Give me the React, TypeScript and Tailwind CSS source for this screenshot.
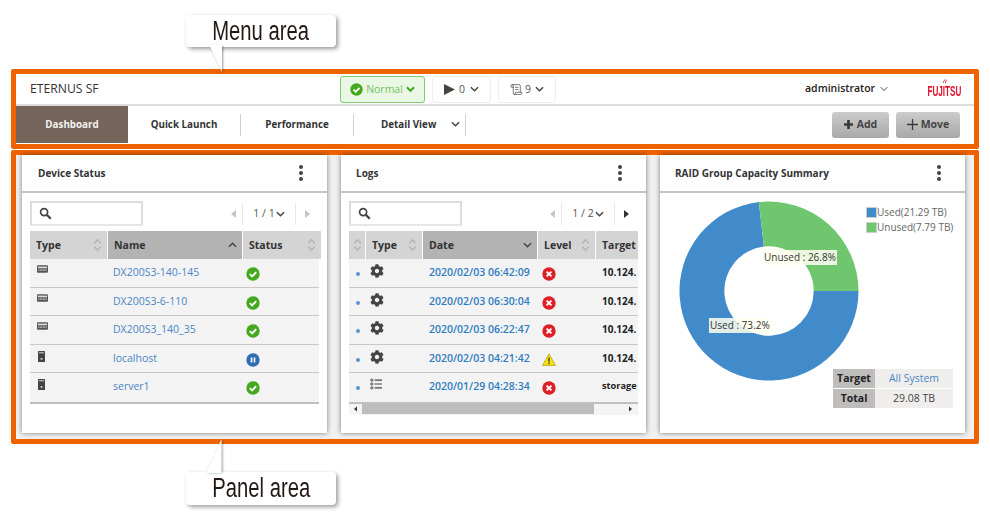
import React from "react";
import { ChevronDown, ScrollText } from "lucide-react";
import { FaCog } from "react-icons/fa";

const Chev = ({ className = "" }: { className?: string }) => (
  <svg viewBox="0 0 10 6" className={`w-[9px] h-[6px] ${className}`} fill="none" stroke="currentColor" strokeWidth="1.6">
    <path d="M1 1l4 4 4-4" />
  </svg>
);

const Sort = () => (
  <svg viewBox="0 0 10 16" className="w-[9px] h-[14px] text-[#b4b4b4]" fill="none" stroke="currentColor" strokeWidth="1.6">
    <path d="M1.5 6l3.5-4 3.5 4M1.5 10l3.5 4 3.5-4" />
  </svg>
);

const Ok = ({ small }: { small?: boolean }) => (
  <svg viewBox="0 0 14 14" className={small ? "w-[13px] h-[13px]" : "w-[14px] h-[14px]"}>
    <circle cx="7" cy="7" r="6.7" fill="#46a81e" />
    <path d="M3.8 7.2l2.3 2.3 4.1-4.3" fill="none" stroke="#fff" strokeWidth="1.9" />
  </svg>
);
const Pause = () => (
  <svg viewBox="0 0 14 14" className="w-[14px] h-[14px]">
    <circle cx="7" cy="7" r="6.7" fill="#2e6db4" />
    <path d="M5.5 4.5v5M8.5 4.5v5" stroke="#fff" strokeWidth="1.6" />
  </svg>
);
const Err = () => (
  <svg viewBox="0 0 14 14" className="w-[14px] h-[14px]">
    <circle cx="7" cy="7" r="6.7" fill="#dd1f26" />
    <path d="M4.6 4.6l4.8 4.8M9.4 4.6l-4.8 4.8" stroke="#fff" strokeWidth="2" />
  </svg>
);
const Warn = () => (
  <svg viewBox="0 0 14 13" className="w-[14px] h-[13px]">
    <path d="M7 .8L13.5 12.4H.5z" fill="#f7e214" stroke="#a99a10" strokeWidth=".7" />
    <path d="M7 4.5v4.2M7 9.6v1.4" stroke="#333" strokeWidth="1.3" />
  </svg>
);
const Search = () => (
  <svg viewBox="0 0 14 14" className="w-[13px] h-[13px] text-[#444]" fill="none" stroke="currentColor">
    <circle cx="5.5" cy="5.5" r="3.8" strokeWidth="1.8" />
    <path d="M8.5 8.5l4.2 4.2" strokeWidth="2.4" />
  </svg>
);
const Storage = () => (
  <svg viewBox="0 0 12 8" className="w-[11px] h-[8px]">
    <rect width="12" height="8" rx="1" fill="#555" />
    <rect x="1" y="1.4" width="10" height="1.8" fill="#ddd" />
    <path d="M1.5 5.2h9" stroke="#ddd" strokeWidth="1.4" strokeDasharray="1 .6" />
  </svg>
);
const Server = () => (
  <svg viewBox="0 0 7 11" className="ml-[1px] w-[7px] h-[11px]">
    <rect width="7" height="11" rx=".5" fill="#444" />
    <rect x="1" y="1" width="5" height="1.4" fill="#aaa" />
    <rect x="2.6" y="7" width="1.8" height="1.8" fill="#ccc" />
  </svg>
);
const ListIcon = () => (
  <svg viewBox="0 0 13 12" className="w-[12px] h-[12px] text-[#444]" fill="none" stroke="currentColor">
    <circle cx="2" cy="1.8" r="1.2" />
    <circle cx="2" cy="6" r="1.2" />
    <circle cx="2" cy="10.2" r="1.2" />
    <path d="M5 1.8h8M5 6h8M5 10.2h8" strokeWidth="1.3" />
  </svg>
);
const Dots = () => (
  <div className="flex flex-col gap-[2px]">
    <span className="w-[4px] h-[4px] rounded-full bg-[#444]" />
    <span className="w-[4px] h-[4px] rounded-full bg-[#444]" />
    <span className="w-[4px] h-[4px] rounded-full bg-[#444]" />
  </div>
);
const Tri = ({ left, dim, small }: { left?: boolean; dim?: boolean; small?: boolean }) => (
  <svg viewBox="0 0 5 8" className={`${small ? "w-[3px] h-[6px]" : "w-[5px] h-[8px]"} ${dim ? "text-[#c4c4c4]" : "text-[#333]"}`} fill="currentColor">
    <path d={left ? "M5 0v8L0 4z" : "M0 0v8l5-4z"} />
  </svg>
);

const Panel = ({ title, pad, children }: { title: string; pad: string; children: React.ReactNode }) => (
  <section className="w-[305px] h-[278px] bg-white shadow-[0_0_5px_rgba(0,0,0,0.5)] flex flex-col">
    <header className={`h-[38px] shrink-0 border-b-2 border-[#c4c4c4] flex items-center justify-between pr-[24px] ${pad}`}>
      <h2 className="pt-[1px] text-[10px] font-bold text-[#333]">{title}</h2>
      <Dots />
    </header>
    {children}
  </section>
);

const Toolbar = ({ page, nextDim }: { page: string; nextDim: boolean }) => (
  <div className="h-[25px] flex items-center justify-between mt-[8px] mb-[5px]">
    <div className="w-[113px] h-[25px] bg-white border-2 border-[#dcdcdc] border-b-[#e6e6e6] pl-[7px] flex items-center">
      <Search />
    </div>
    <div className="flex items-center h-[25px] text-[10.5px] text-[#555]">
      <span className="w-[11px] flex justify-start"><Tri left dim /></span>
      <span className="w-[54px] h-[22px] border-x border-[#e8e8e8] flex items-center justify-center gap-[1px]">
        {page}
        <Chev className="text-[#444]" />
      </span>
      <span className="w-[23px] flex justify-center"><Tri dim={nextDim} /></span>
    </div>
  </div>
);

const HCell = ({ label, active, sortIcon, dir }: { label?: string; active?: boolean; sortIcon?: boolean; dir?: "up" | "down" }) => (
  <div className={`h-[28px] flex items-center justify-between pl-[6px] pr-[5px] text-[10.5px] font-bold text-[#333] ${active ? "bg-[#b3b3b3]" : "bg-[#d4d4d4]"}`}>
    <span className="pt-[1px]">{label}</span>
    {sortIcon && <Sort />}
    {dir && <Chev className={`text-[#444] ${dir === "up" ? "rotate-180" : ""}`} />}
  </div>
);

const devices = [
  { icon: <Storage />, name: "DX200S3-140-145", status: <Ok /> },
  { icon: <Storage />, name: "DX200S3-6-110", status: <Ok /> },
  { icon: <Storage />, name: "DX200S3_140_35", status: <Ok /> },
  { icon: <Server />, name: "localhost", status: <Pause /> },
  { icon: <Server />, name: "server1", status: <Ok /> },
];

const gear = <FaCog className="text-[#444] text-[14px]" />;
const logs = [
  { icon: gear, date: "2020/02/03 06:42:09", level: <Err />, target: "10.124.", size: "text-[10px]" },
  { icon: gear, date: "2020/02/03 06:30:04", level: <Err />, target: "10.124.", size: "text-[10px]" },
  { icon: gear, date: "2020/02/03 06:22:47", level: <Err />, target: "10.124.", size: "text-[10px]" },
  { icon: gear, date: "2020/02/03 04:21:42", level: <Warn />, target: "10.124.", size: "text-[10px]" },
  { icon: <ListIcon />, date: "2020/01/29 04:28:34", level: <Err />, target: "storage", size: "text-[9.2px]" },
];

const DeviceTable = () => (
  <div className="border-b-2 border-[#c0c0c0]">
    <div className="grid grid-cols-[77px_134px_78px] gap-x-[1px] w-[289px] -mr-[1px]">
      <HCell label="Type" sortIcon />
      <HCell label="Name" active dir="up" />
      <HCell label="Status" sortIcon />
    </div>
    {devices.map((d, i) => (
      <div key={d.name} className={`grid grid-cols-[78px_134px_77px] h-[28.5px] bg-[#f3f3f3] text-[10.5px] ${i < 4 ? "border-b border-[#c8c8c8]" : ""}`}>
        <div className="pl-[7px] pt-[6px]">{d.icon}</div>
        <div className="pl-[5px] pt-[6px] text-[#4a86c5]">{d.name}</div>
        <div className="pl-[4px] pt-[8px]">{d.status}</div>
      </div>
    ))}
  </div>
);

const LogTable = () => (
  <div>
    <div className="overflow-hidden border-b-2 border-[#c0c0c0] w-[289px]">
      <div className="grid grid-cols-[16px_56px_114px_57px_60px] gap-x-[1px] w-[307px]">
        <div className="h-[28px] bg-[#d4d4d4] flex items-center justify-center"><Sort /></div>
        <HCell label="Type" sortIcon />
        <HCell label="Date" active dir="down" />
        <HCell label="Level" sortIcon />
        <HCell label="Target" />
      </div>
      {logs.map((l, i) => (
        <div key={l.date} className={`grid grid-cols-[17px_57px_115px_58px_42px] w-[289px] h-[28.5px] bg-[#f3f3f3] text-[10.5px] ${i < 4 ? "border-b border-[#c8c8c8]" : ""}`}>
          <div className="flex justify-center pt-[13px]"><span className="w-[4px] h-[4px] rounded-full bg-[#5b94d0]" /></div>
          <div className="pl-[4px] pt-[5px]">{l.icon}</div>
          <div className="pl-[6px] pt-[6px] font-semibold text-[#2e7cc0] whitespace-nowrap">{l.date}</div>
          <div className="pl-[4px] pt-[8px]">{l.level}</div>
          <div className={`pl-[6px] pt-[6px] font-bold text-[#222] whitespace-nowrap ${l.size}`}>{l.target}</div>
        </div>
      ))}
    </div>
    <div className="h-[11px] w-[289px] bg-[#f4f4f4] flex items-center">
      <span className="w-[13px] flex justify-center"><Tri left small /></span>
      <div className="w-[232px] h-[10px] bg-[#bdbdbd]" />
      <span className="flex-1 flex justify-end pr-[6px]"><Tri small /></span>
    </div>
  </div>
);

const Donut = () => (
  <svg viewBox="0 0 182 182" className="w-[182px] h-[182px]">
    <path d="M180.5 91 A89.5 89.5 0 1 1 80.8 2.1 L85.9 46.6 A44.7 44.7 0 1 0 135.7 91 Z" fill="#428bca" />
    <path d="M80.8 2.1 A89.5 89.5 0 0 1 180.5 91 L135.7 91 A44.7 44.7 0 0 0 85.9 46.6 Z" fill="#70c66f" />
  </svg>
);

const Callout = ({ label, className, tail }: { label: string; className: string; tail: React.ReactNode }) => (
  <div className={`absolute w-[150px] h-[32px] bg-white rounded-[4px] shadow-[2px_2px_4px_rgba(0,0,0,0.4)] flex items-center justify-center ${className}`}>
    <span className="text-[27px] leading-none text-[#231815] scale-x-[0.75] whitespace-nowrap [font-family:'Liberation_Sans',sans-serif]">{label}</span>
    {tail}
  </div>
);

export default function App() {
  return (
    <div className="relative w-[990px] h-[515px] bg-white overflow-hidden pt-[69px] pl-[11px] [font-family:'Open_Sans','Noto_Sans',sans-serif]">
      <div className="w-[968px] h-[80px] border-[5px] border-[#ee6300] rounded-[2px] bg-white">
        <div className="h-[32px] border-b-2 border-[#dedede] flex items-center pl-[14px] pr-[13px]">
          <span className="text-[12.2px] text-[#333] w-[310px] pt-[1px]">ETERNUS SF</span>
          <div className="w-[85px] h-[27px] rounded-[3px] border border-[#7ecc6c] bg-[#eaf7e5] flex items-center justify-center gap-[3px] text-[10.5px] text-[#73c15f]">
            <Ok small />
            <span className="pt-[1px]">Normal</span>
            <svg viewBox="0 0 10 6" className="w-[9px] h-[6px] text-[#46a81e]" fill="none" stroke="currentColor" strokeWidth="2.2"><path d="M1 1l4 4 4-4" /></svg>
          </div>
          <div className="ml-[7px] w-[59px] h-[27px] rounded-[3px] border border-[#eeeeee] flex items-center justify-center gap-[4px] text-[10.5px] text-[#555]">
            <svg viewBox="0 0 10 10" className="w-[11px] h-[11px] text-[#444]" fill="currentColor"><path d="M0 0v10l10-5z" /></svg>
            <span className="pt-[1px]">0</span>
            <Chev className="ml-[1px] text-[#444]" />
          </div>
          <div className="ml-[7px] w-[58px] h-[27px] rounded-[3px] border border-[#eeeeee] flex items-center justify-center gap-[2px] text-[10.5px] text-[#555]">
            <ScrollText size={13} strokeWidth={1.3} className="text-[#444]" />
            <span className="pt-[1px]">9</span>
            <Chev className="ml-[2px] text-[#444]" />
          </div>
          <span className="ml-[249px] text-[10.5px] font-semibold text-[#222]">administrator</span>
          <ChevronDown size={12} strokeWidth={2} className="ml-[3px] text-[#444]" />
          <div className="relative ml-auto text-[14px] font-bold leading-none text-[#e2112b] scale-x-[0.58] origin-right whitespace-nowrap pt-[4px] [font-family:'Liberation_Sans',sans-serif]">
            FUJITSU
            <svg viewBox="0 0 8 6" className="absolute left-[25px] top-[-1px] w-[10px] h-[5px]" fill="none" stroke="#e2112b" strokeWidth="1.2">
              <path d="M1 5C1 2 4 0 7 1.5 5.5 3 5 4 5 5" />
            </svg>
          </div>
        </div>
        <nav className="h-[37px] flex items-center pr-[14px] text-[9.8px]">
          <div className="w-[112px] h-[37px] bg-[#75645a] flex items-center justify-center pt-[2px] font-bold text-[#f2f2f2]">Dashboard</div>
          {["Quick Launch", "Performance"].map((t) => (
            <div key={t} className="w-[113px] h-[22px] border-r border-[#d0d0d0] flex items-center justify-center pt-[2px] font-bold text-[#333]">{t}</div>
          ))}
          <div className="w-[112px] h-[22px] border-r border-[#d0d0d0] flex items-center font-bold text-[#333] pl-[27px] pr-[5px] pt-[2px] justify-between">
            <span>Detail View</span>
            <Chev className="text-[#444] -mt-[4px]" />
          </div>
          <div className="ml-auto flex gap-[7px]">
            <button className="w-[57px] h-[26px] rounded-[3px] bg-gradient-to-b from-[#cccccc] to-[#a8a8a8] flex items-center justify-center gap-[4px] text-[10.5px] font-bold text-[#444]">
              <svg viewBox="0 0 10 10" className="w-[9px] h-[9px]" fill="#3a3a3a"><path d="M3.5 0h3v3.5H10v3H6.5V10h-3V6.5H0v-3h3.5z" /></svg>
              Add
            </button>
            <button className="w-[64px] h-[26px] rounded-[3px] bg-gradient-to-b from-[#cccccc] to-[#a8a8a8] flex items-center justify-center gap-[3px] text-[10.5px] font-bold text-[#444]">
              <svg viewBox="0 0 11 11" className="w-[11px] h-[11px]" fill="none" stroke="#3a3a3a" strokeWidth="1.3"><path d="M5.5 0v11M0 5.5h11" /></svg>
              Move
            </button>
          </div>
        </nav>
      </div>

      <div className="mt-[1px] w-[968px] h-[294px] border-[5px] border-[#ee6300] rounded-[2px] bg-[#f1f1f1] flex gap-[14px] pl-[6px] pt-0">
        <Panel title="Device Status" pad="pl-[16px]">
          <div className="px-[8px]">
            <Toolbar page="1 / 1" nextDim />
            <DeviceTable />
          </div>
        </Panel>
        <Panel title="Logs" pad="pl-[15px]">
          <div className="px-[8px]">
            <Toolbar page="1 / 2" nextDim={false} />
            <LogTable />
          </div>
        </Panel>
        <Panel title="RAID Group Capacity Summary" pad="pl-[15px]">
          <div className="relative flex-1">
            <div className="absolute left-[18px] top-[7px]"><Donut /></div>
            <span className="absolute left-[103px] top-[57px] px-[1px] bg-[#fffff0]/85 text-[10px] leading-[15px] text-[#333] whitespace-nowrap">Unused : 26.8%</span>
            <span className="absolute left-[49px] top-[125px] px-[1px] bg-[#fffff0]/85 text-[10px] leading-[15px] text-[#333] whitespace-nowrap">Used : 73.2%</span>
            <div className="absolute left-[207px] top-[12px] text-[10px] leading-[15px] text-[#666]">
              <div className="flex items-center"><span className="w-[9px] h-[9px] mr-[1px] bg-[#428bca] outline outline-1 outline-[#cccccc]" />Used(21.29 TB)</div>
              <div className="flex items-center"><span className="w-[9px] h-[9px] mr-[1px] bg-[#70c66f] outline outline-1 outline-[#cccccc]" />Unused(7.79 TB)</div>
            </div>
            <div className="absolute left-[173px] top-[176px] w-[120px] grid grid-cols-[42px_78px] gap-y-[1px] text-[10.5px] leading-[19px] text-center">
              <div className="bg-[#bfbdbc] font-bold text-[#222]">Target</div>
              <div className="bg-[#f0eeec] text-[#4a86c5]">All System</div>
              <div className="bg-[#bfbdbc] font-bold text-[#222]">Total</div>
              <div className="bg-[#f0eeec] text-[#444]">29.08 TB</div>
            </div>
          </div>
        </Panel>
      </div>

      <Callout
        label="Menu area"
        className="left-[186px] top-[15px]"
        tail={
          <svg viewBox="0 0 16 27" className="absolute left-[23px] top-[30px] w-[16px] h-[27px] drop-shadow-[1px_1px_1px_rgba(0,0,0,0.4)]">
            <path d="M0 0h13v27z" fill="#fff" />
          </svg>
        }
      />
      <Callout
        label="Panel area"
        className="left-[186px] top-[472px] !h-[33px]"
        tail={
          <svg viewBox="0 0 16 34" className="absolute left-[20px] -top-[33px] w-[16px] h-[34px] drop-shadow-[1px_0_1px_rgba(0,0,0,0.4)]">
            <path d="M15.5 0v34H0z" fill="#fff" />
          </svg>
        }
      />
    </div>
  );
}
